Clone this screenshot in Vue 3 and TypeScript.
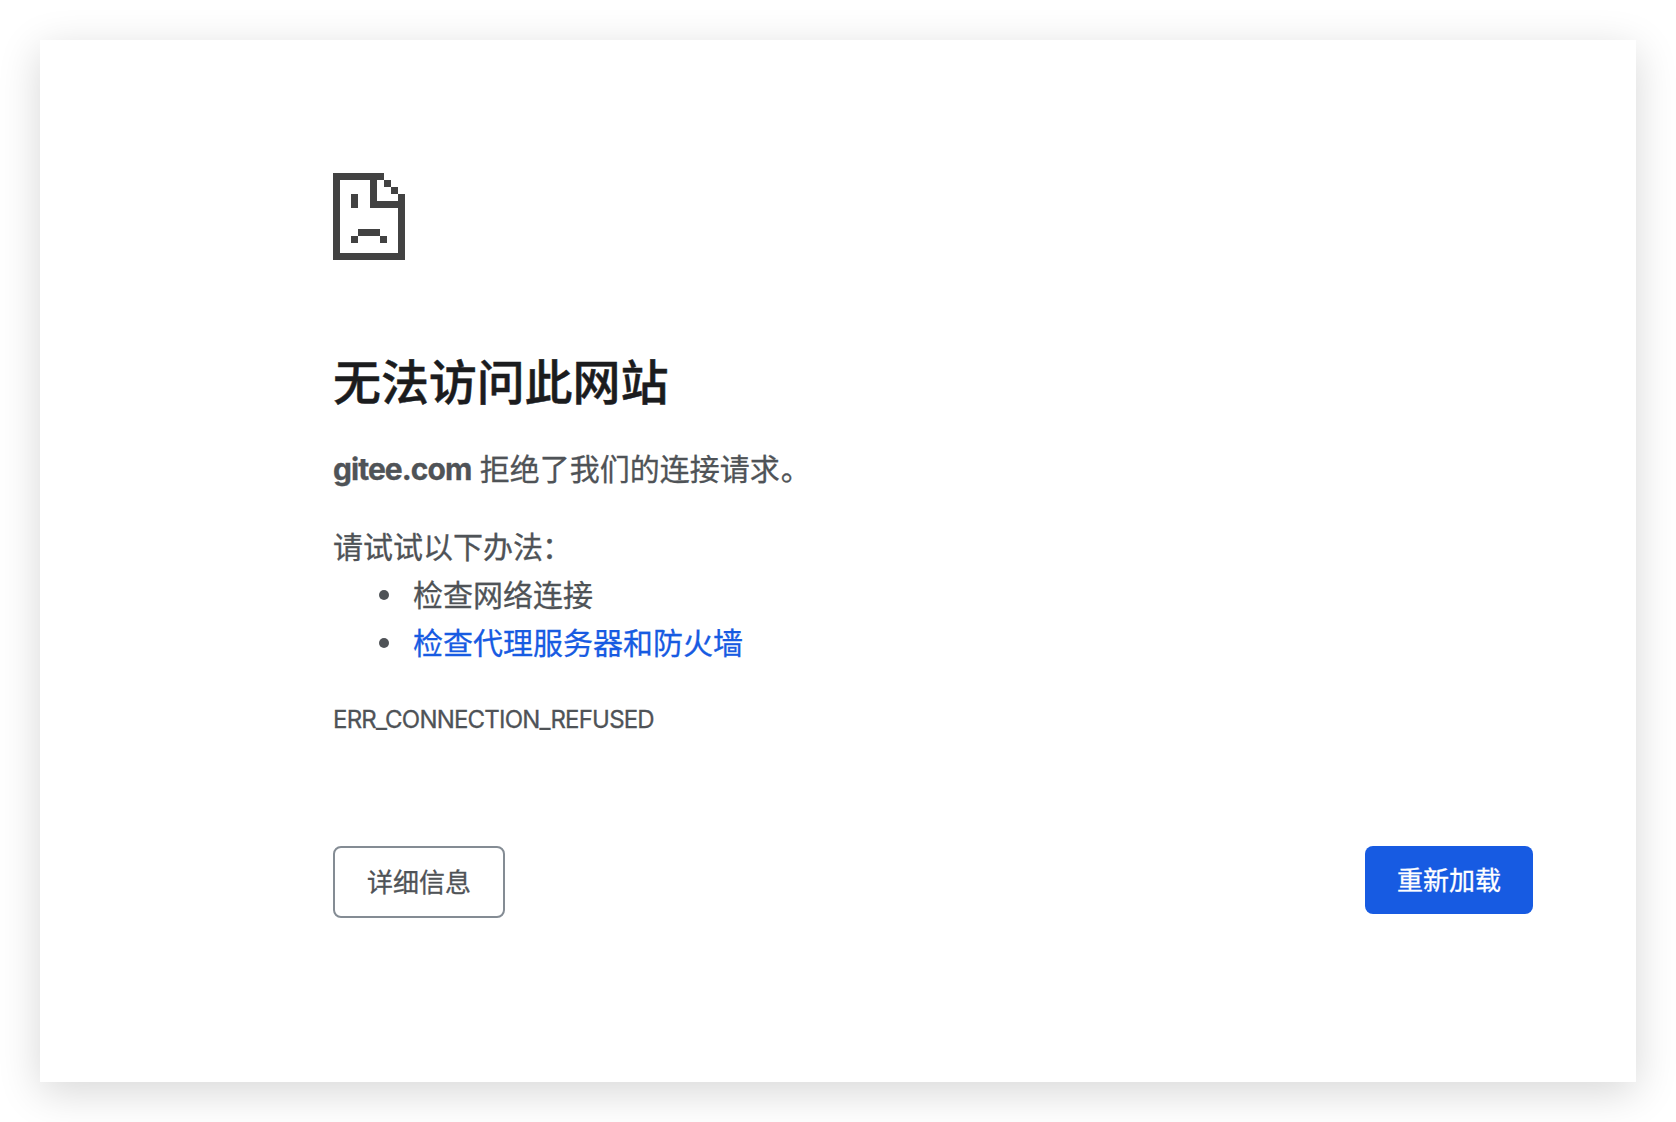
<script setup lang="ts">
interface Suggestion {
  text: string
  link: boolean
}

const host = 'gitee.com'
const suggestions: Suggestion[] = [
  { text: '检查网络连接', link: false },
  { text: '检查代理服务器和防火墙', link: true },
]
</script>

<template>
  <main class="window">
    <div class="content">
      <svg class="icon" width="72" height="87" viewBox="0 0 72 87" shape-rendering="crispEdges" aria-hidden="true">
        <path d="M0 0H51V7H44V28H65V21H72V87H0ZM7 7V80H65V35H37V7Z" fill-rule="evenodd" />
        <path d="M51 7h7v7h-7zM58 14h7v7h-7zM18 21h7v14h-7zM25 56h22v7H25zM18 63h7v7h-7zM47 63h7v7h-7z" />
      </svg>
      <h1>无法访问此网站</h1>
      <p class="summary"><strong>{{ host }}</strong><span> 拒绝了我们的连接请求</span><span class="stop">。</span></p>
      <p class="hint">请试试以下办法<span class="colon">：</span></p>
      <ul>
        <li v-for="item in suggestions" :key="item.text">
          <a v-if="item.link">{{ item.text }}</a>
          <span v-else>{{ item.text }}</span>
        </li>
      </ul>
      <div class="code">ERR_CONNECTION_REFUSED</div>
      <div class="actions">
        <button class="details" type="button">详细信息</button>
        <button class="reload" type="button">重新加载</button>
      </div>
    </div>
  </main>
</template>

<style>
body {
  margin: 0;
  background: #fff;
}
</style>

<style scoped>
.window {
  box-sizing: border-box;
  width: 1596px;
  height: 1042px;
  margin: 40px;
  padding: 133px 103px 0 293px;
  background: #fff;
  box-shadow: 0 10px 40px rgba(0, 0, 0, 0.16);
  color: #4f5357;
  font-family: Inter, "Noto Sans CJK SC", sans-serif;
  font-size: 30px;
  line-height: 48px;
  -webkit-text-stroke: 0.3px currentColor;
}

.content {
  display: flex;
  flex-direction: column;
}

.icon {
  display: block;
  fill: #424242;
}

h1 {
  margin: 94px 0 0;
  color: #1b1c1e;
  font-size: 48px;
  font-weight: 500;
  line-height: 58px;
  letter-spacing: -0.1px;
  -webkit-text-stroke: 0.5px currentColor;
}

p,
ul {
  margin: 0;
}

.summary {
  margin-top: 33px;
  white-space: pre;
}

.summary strong {
  font-weight: 700;
  letter-spacing: -0.95px;
}

.stop {
  margin-left: 1px;
}

.colon {
  margin-left: -1px;
}

.hint {
  margin-top: 30px;
}

ul {
  padding-left: 46px;
  list-style: none;
}

li {
  display: flex;
  align-items: center;
  gap: 24px;
}

li::before {
  width: 10px;
  height: 10px;
  border-radius: 50%;
  background: #4f5357;
  content: "";
}

a {
  color: #175be2;
}

.code {
  margin-top: 29px;
  font-size: 24px;
  letter-spacing: -0.8px;
}

.actions {
  display: flex;
  align-items: flex-start;
  justify-content: space-between;
  margin-top: 102px;
}

button {
  box-sizing: border-box;
  padding: 2px 0 0;
  border: 0;
  border-radius: 8px;
  font: 400 26px/40px Inter, "Noto Sans CJK SC", sans-serif;
  -webkit-text-stroke: 0.3px currentColor;
}

.details {
  width: 172px;
  height: 72px;
  border: 2px solid #848c94;
  background: #fff;
  color: #4f5357;
}

.reload {
  width: 168px;
  height: 68px;
  background: #175be2;
  color: #fff;
}
</style>
